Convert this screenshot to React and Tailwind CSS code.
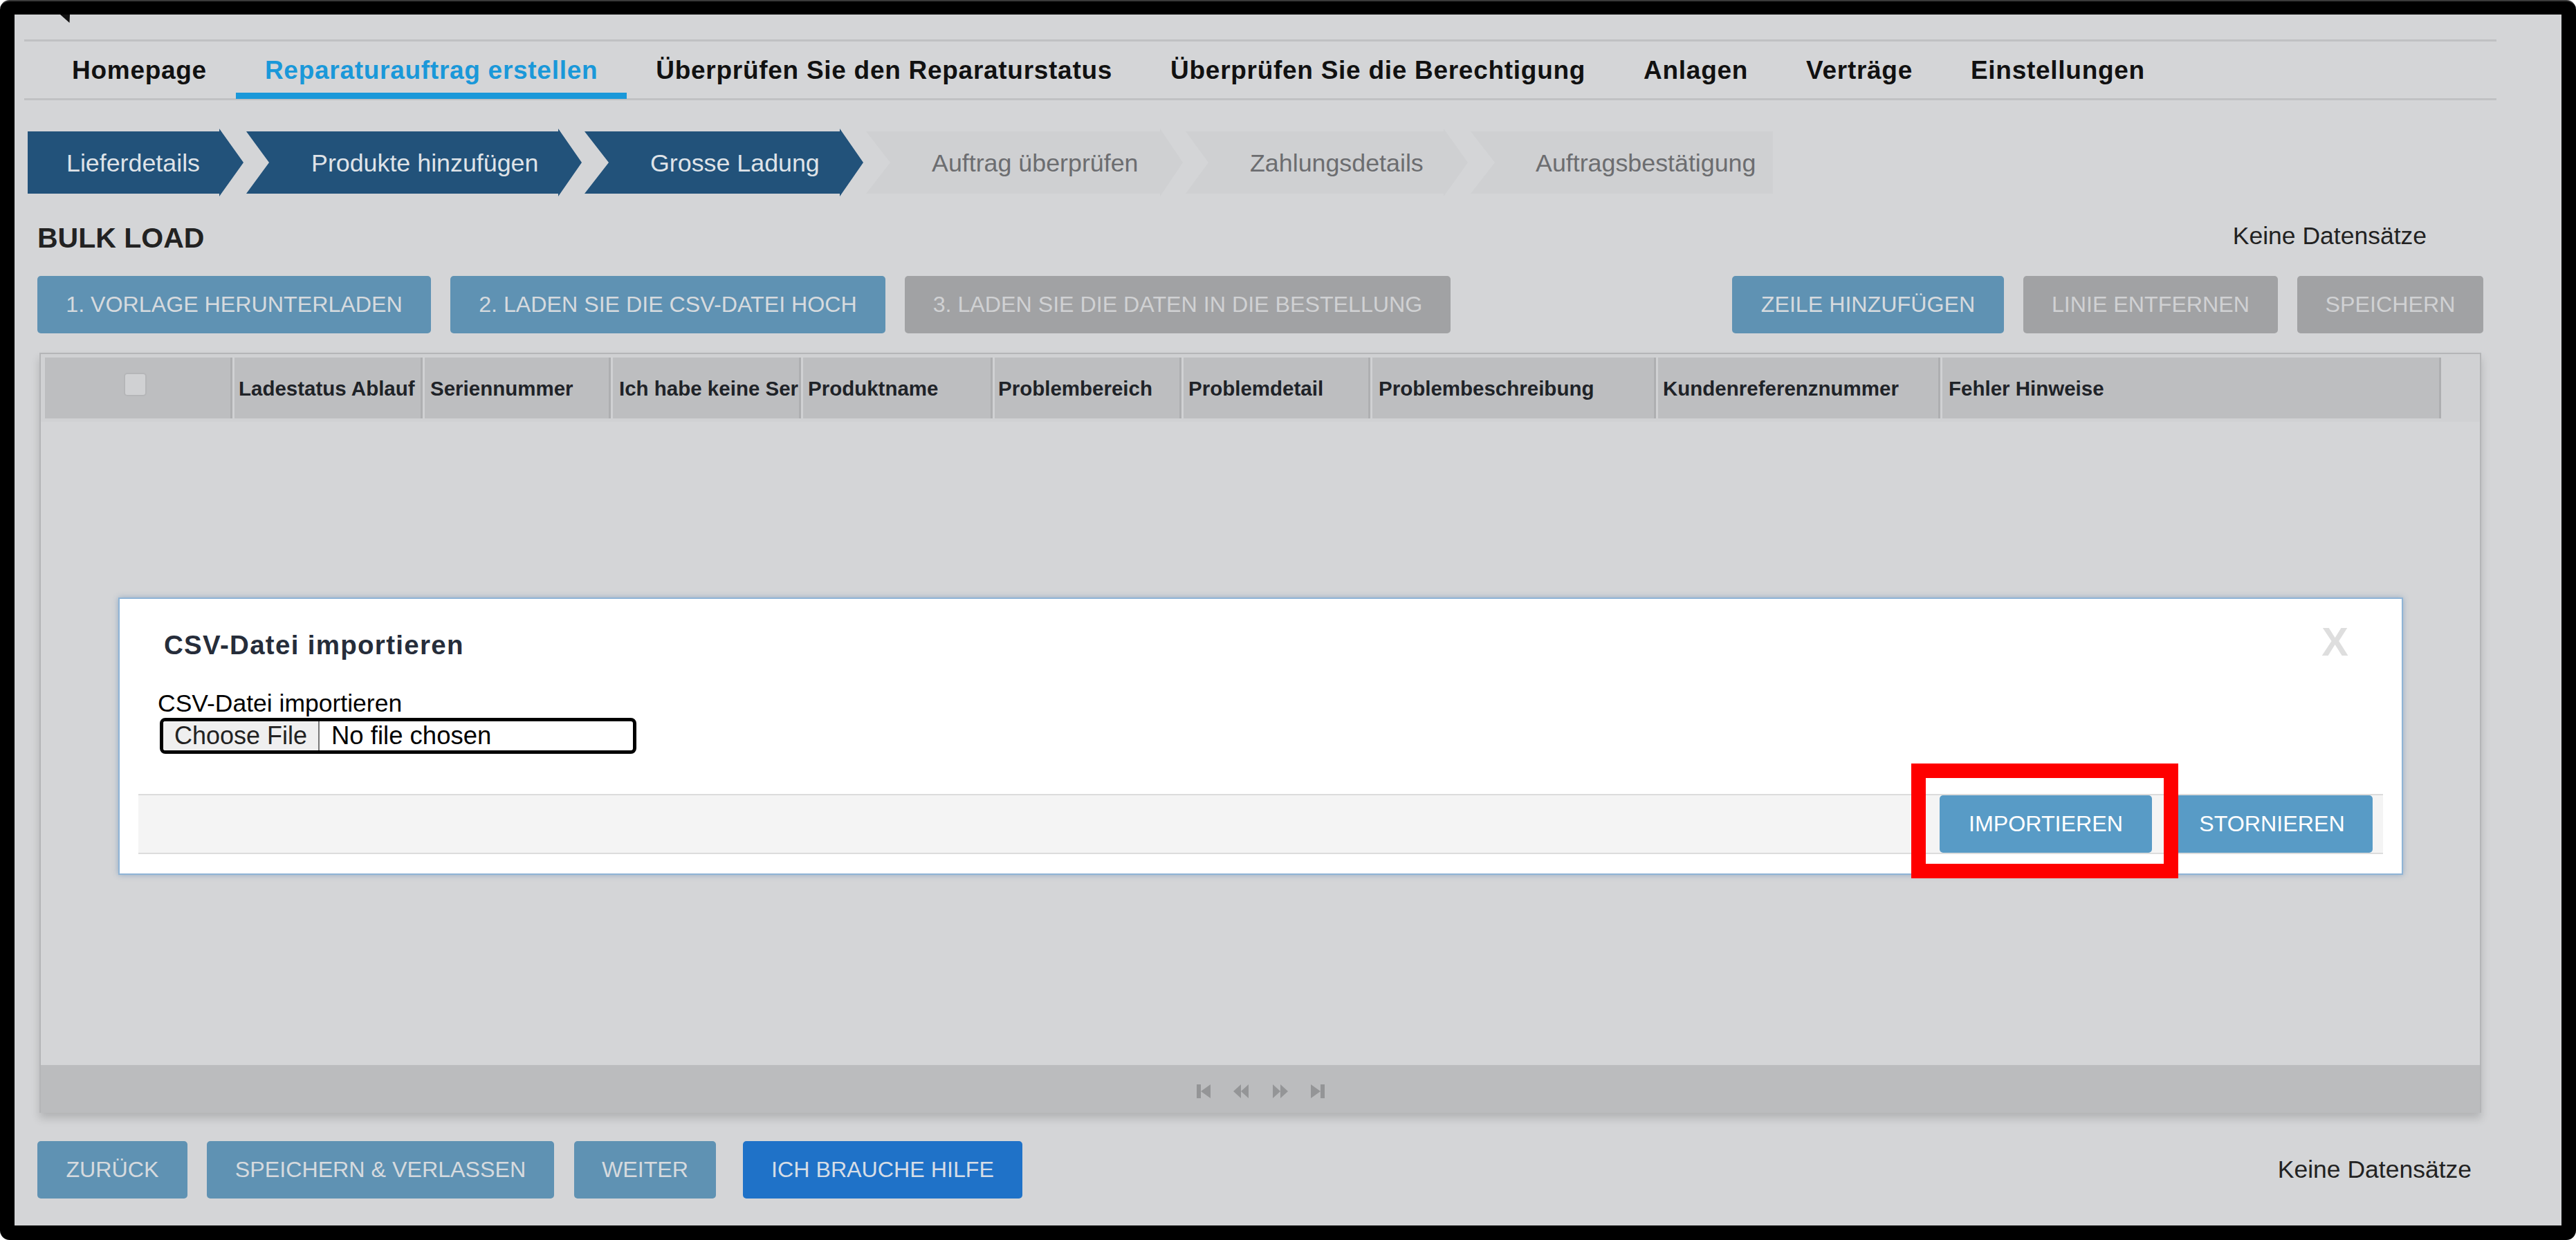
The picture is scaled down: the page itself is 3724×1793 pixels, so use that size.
const nav = [
  ['Homepage', false],
  ['Reparaturauftrag erstellen', true],
  ['Überprüfen Sie den Reparaturstatus', false],
  ['Überprüfen Sie die Berechtigung', false],
  ['Anlagen', false],
  ['Verträge', false],
  ['Einstellungen', false],
];

const steps = [
  { t: 'Lieferdetails', c: 'w-[312px] pl-[56px] bg-[#22527a] text-[#dfe3e8] [clip-path:polygon(0_4px,277px_4px,277px_0,312px_49px,277px_98px,277px_94px,0_94px)]' },
  { t: 'Produkte hinzufügen', c: 'w-[485px] pl-[94px] bg-[#22527a] text-[#dfe3e8] [clip-path:polygon(0_94px,33px_49px,0_4px,451px_4px,451px_0,485px_49px,451px_98px,451px_94px)]' },
  { t: 'Grosse Ladung', c: 'w-[403px] pl-[95px] bg-[#22527a] text-[#dfe3e8] [clip-path:polygon(0_94px,35px_49px,0_4px,369px_4px,369px_0,403px_49px,369px_98px,369px_94px)]' },
  { t: 'Auftrag überprüfen', c: 'w-[458px] pl-[95px] bg-[#cfd0d2] text-[#6c6d70] [clip-path:polygon(0_94px,35px_49px,0_4px,425px_4px,425px_0,458px_49px,425px_98px,425px_94px)]' },
  { t: 'Zahlungsdetails', c: 'w-[408px] pl-[93px] bg-[#cfd0d2] text-[#6c6d70] [clip-path:polygon(0_94px,33px_49px,0_4px,373px_4px,373px_0,408px_49px,373px_98px,373px_94px)]' },
  { t: 'Auftragsbestätigung', c: 'w-[437px] pl-[94px] bg-[#cfd0d2] text-[#6c6d70] [clip-path:polygon(0_94px,35px_49px,0_4px,100%_4px,100%_94px)]' },
];

const cols = [
  { t: '', c: 'w-[271px]' },
  { t: 'Ladestatus Ablauf', c: 'w-[272px] pl-[6px]' },
  { t: 'Seriennummer', c: 'w-[269px] pl-[8px]' },
  { t: 'Ich habe keine Seriennummer', c: 'w-[272px] pl-[9px]' },
  { t: 'Produktname', c: 'w-[274px] pl-[7px]' },
  { t: 'Problembereich', c: 'w-[270px] pl-[5px]' },
  { t: 'Problemdetail', c: 'w-[270px] pl-[7px]' },
  { t: 'Problembeschreibung', c: 'w-[410px] pl-[9px]' },
  { t: 'Kundenreferenznummer', c: 'w-[408px] pl-[7px]' },
  { t: 'Fehler Hinweise', c: 'w-[721px] pl-[9px]' },
];

function Btn({ children, className }) {
  return (
    <button className={`flex h-[83px] items-center justify-center rounded-[5px] text-[32.200px] leading-none whitespace-nowrap ${className}`}>
      {children}
    </button>
  );
}

const blue = 'bg-[#5f92b3] text-[#d6dade]';
const gray = 'bg-[#a1a2a4] text-[#d0d1d3]';

function Pager() {
  return (
    <div className="flex items-center gap-[33px] pt-[6px]">
      <svg width="20" height="20" viewBox="0 0 20 20" fill="#949597"><rect x="0" y="0" width="6" height="20" /><path d="M20 0V20L6 10Z" /></svg>
      <svg width="22" height="20" viewBox="0 0 22 20" fill="#949597"><path d="M11 0V20L0 10Z" /><path d="M22 0V20L11 10Z" /></svg>
      <svg width="22" height="20" viewBox="0 0 22 20" fill="#949597" className="ml-[2px]"><path d="M0 0V20L11 10Z" /><path d="M11 0V20L22 10Z" /></svg>
      <svg width="20" height="20" viewBox="0 0 20 20" fill="#949597"><path d="M0 0V20L14 10Z" /><rect x="14" y="0" width="6" height="20" /></svg>
    </div>
  );
}

export default function App() {
  return (
    <div className="h-[1793px] w-[3724px] overflow-hidden bg-white font-['Liberation_Sans',Arial,sans-serif]">
      <div className="h-full w-full rounded-[14px] border-t-[2px] border-[#3a3a3a] bg-black px-[21px] pt-[19px] pb-[21px]">
        <div className="relative flex h-full w-full flex-col bg-[#d4d5d7]">
          {/* top strip */}
          <div className="ml-[14px] mr-[94px] h-[39px] border-b-[3px] border-[#c0c1c3]">
            <svg width="16" height="12" viewBox="0 0 16 12" className="ml-[52px]" fill="#111"><path d="M0 0H14L13.500 12Z" /></svg>
          </div>

          {/* nav */}
          <div className="ml-[14px] mr-[94px] flex h-[85px] border-b-[3px] border-[#c0c1c3] pl-[27px]">
            {nav.map(([t, active]) => (
              <div
                key={t}
                className={`flex h-[83px] items-center whitespace-nowrap border-b-[9px] px-[42px] pt-[9px] text-[37px] font-bold tracking-[0.72px] ${active ? 'border-[#1a98d9] text-[#1a98d9]' : 'border-transparent text-[#111]'}`}
              >
                {t}
              </div>
            ))}
          </div>

          {/* steps */}
          <div className="ml-[19px] mt-[41px] flex gap-[4px]">
            {steps.map((s) => (
              <div key={s.t} className={`flex h-[99px] shrink-0 items-center whitespace-nowrap pt-[2px] text-[35.800px] ${s.c}`}>
                {s.t}
              </div>
            ))}
          </div>

          {/* title row */}
          <div className="ml-[33px] mr-[113px] mt-[36px] flex items-start justify-between">
            <div className="text-[41px] font-bold leading-[46px] text-[#222]">BULK LOAD</div>
            <div className="mr-[82px] text-[35.500px] leading-[41px] text-[#222]">Keine Datensätze</div>
          </div>

          {/* toolbar */}
          <div className="ml-[33px] mr-[113px] mt-[32px] flex justify-between">
            <div className="flex gap-[28px]">
              <Btn className={`w-[569px] ${blue}`}>1. VORLAGE HERUNTERLADEN</Btn>
              <Btn className={`w-[629px] ${blue}`}>2. LADEN SIE DIE CSV-DATEI HOCH</Btn>
              <Btn className={`w-[789px] ${gray}`}>3. LADEN SIE DIE DATEN IN DIE BESTELLUNG</Btn>
            </div>
            <div className="flex gap-[28px]">
              <Btn className={`w-[393px] ${blue}`}>ZEILE HINZUFÜGEN</Btn>
              <Btn className={`w-[368px] ${gray}`}>LINIE ENTFERNEN</Btn>
              <Btn className={`w-[269px] ${gray}`}>SPEICHERN</Btn>
            </div>
          </div>

          {/* grid */}
          <div className="ml-[36px] mr-[116px] mt-[28px] flex h-[1099px] flex-col border-x-[2px] border-t-[2px] border-[#b4b5b7] shadow-[0_8px_12px_rgba(0,0,0,0.16)]">
            <div className="flex h-[98px] shrink-0 gap-[3px] bg-[#d0d1d3] pl-[6px] pt-[5px] pb-[5px]">
              {cols.map((c, i) => (
                <div key={i} className={`flex h-[88px] shrink-0 items-center overflow-hidden whitespace-nowrap border-r-[3px] border-[#aeafb1] bg-[#bdbec0] pt-[2px] text-[29.500px] font-bold text-[#1f2328] ${c.c}`}>
                  {i === 0 ? (
                    <div className="mb-[12px] ml-[114px] h-[34px] w-[33px] rounded-[5px] border-[2px] border-[#b5b6b8] bg-[#d0d1d3]" />
                  ) : (
                    c.t
                  )}
                </div>
              ))}
            </div>
            <div className="flex-1 bg-[#d4d5d7]" />
            <div className="flex h-[69px] shrink-0 items-center justify-center bg-[#bbbcbe]">
              <Pager />
            </div>
          </div>

          {/* bottom row */}
          <div className="ml-[33px] mr-[130px] mt-[41px] flex items-start justify-between">
            <div className="flex">
              <Btn className={`w-[217px] ${blue}`}>ZURÜCK</Btn>
              <Btn className={`ml-[28px] w-[502px] ${blue}`}>SPEICHERN &amp; VERLASSEN</Btn>
              <Btn className={`ml-[29px] w-[205px] ${blue}`}>WEITER</Btn>
              <Btn className="ml-[39px] w-[404px] bg-[#1f72c8] text-[#d6dde6]">ICH BRAUCHE HILFE</Btn>
            </div>
            <div className="mt-[21px] text-[35.500px] leading-[41px] text-[#222]">Keine Datensätze</div>
          </div>

          {/* modal */}
          <div className="absolute left-[150px] top-[843px] flex h-[401px] w-[3303px] flex-col border-[2px] border-[#8fb4d6] bg-white shadow-[0_0_8px_rgba(70,120,170,0.45)]">
            <div className="ml-[64px] mt-[44px] text-[38.500px] font-bold leading-[46px] tracking-[1.3px] text-[#262d3a]">CSV-Datei importieren</div>
            <div className="ml-[55px] mt-[41px] text-[35.500px] leading-[41px] text-black">CSV-Datei importieren</div>
            <div className="ml-[58px] flex h-[52px] w-[689px] items-stretch overflow-hidden rounded-[8px] border-[5px] border-black bg-white text-[36px] leading-none">
              <div className="flex w-[226px] items-center justify-center border-r-[2px] border-[#777] bg-[#efefef] text-[#222]">Choose File</div>
              <div className="flex items-center pl-[17px] text-[36.500px] text-black">No file chosen</div>
            </div>
            <div className="mx-[27px] mt-[58px] flex h-[87px] items-center justify-end border-y-[2px] border-[#dcdcdc] bg-[#f4f4f4] pr-[15px]">
              <Btn className="h-[82px] w-[307px] bg-[#589bc6] text-white">IMPORTIEREN</Btn>
              <Btn className="ml-[28px] h-[82px] w-[291px] bg-[#589bc6] text-white">STORNIEREN</Btn>
            </div>
            <div className="absolute right-[77px] top-[30px] text-[58px] font-bold leading-[64px] text-[#dedede]">X</div>
            <div className="absolute left-[2590px] top-[238px] h-[166px] w-[386px] border-[21px] border-[#ff0000]" />
          </div>
        </div>
      </div>
    </div>
  );
}
